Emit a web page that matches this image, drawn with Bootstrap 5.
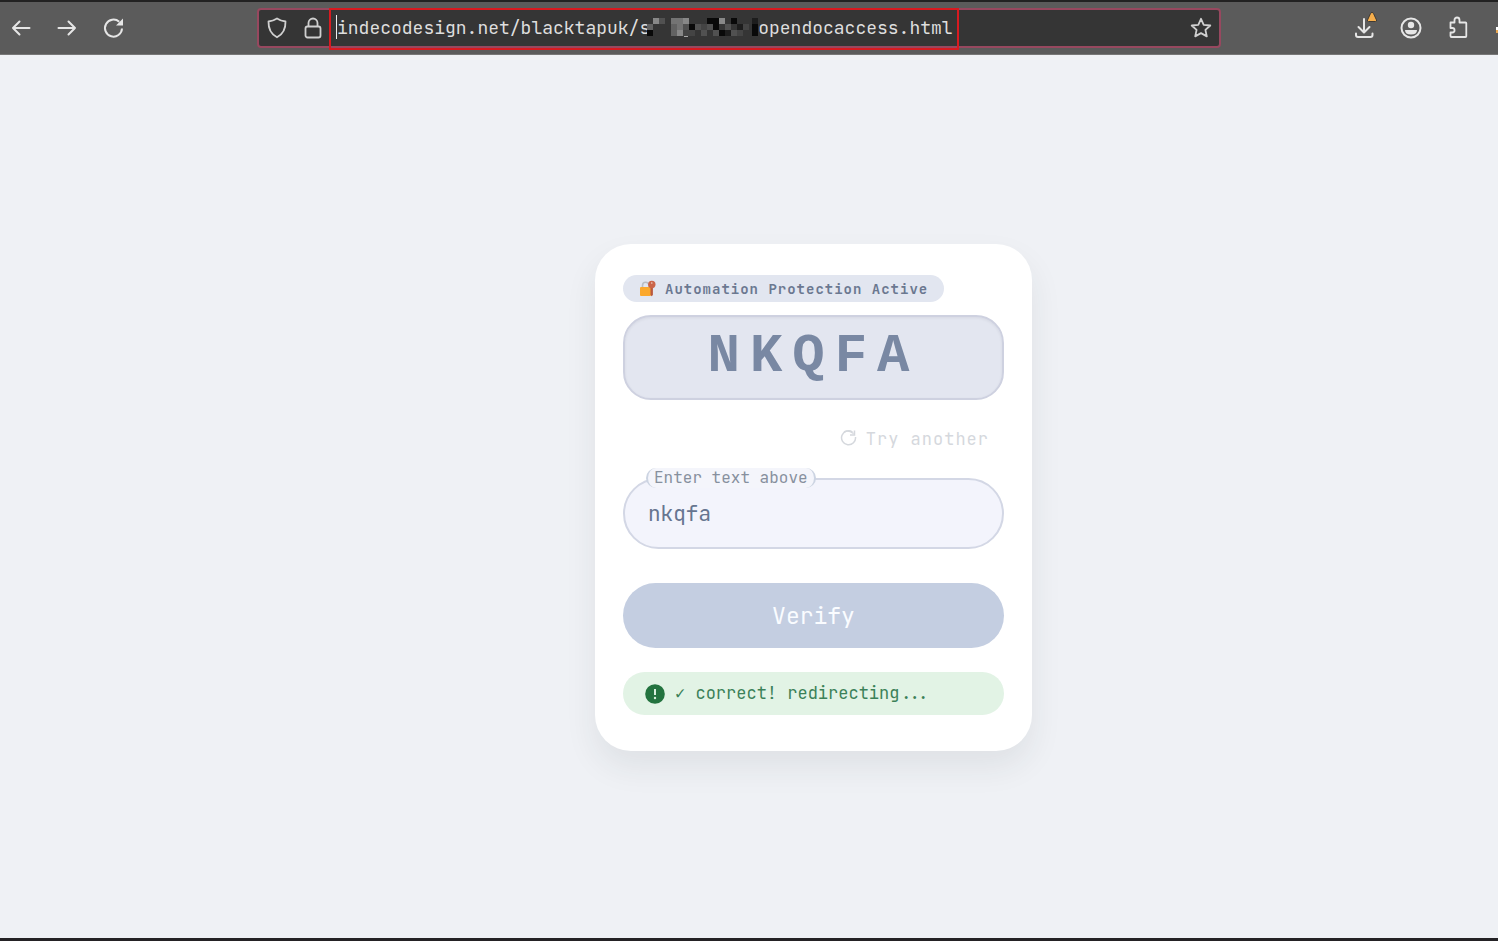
<!DOCTYPE html>
<html lang="en">
<head>
<meta charset="utf-8">
<meta name="viewport" content="width=device-width, initial-scale=1">
<title>Verification</title>
<link href="https://cdn.jsdelivr.net/npm/bootstrap@5.3.0/dist/css/bootstrap.min.css" rel="stylesheet">
<style>
body { background: #eff1f5; font-family: "JetBrains Mono", "DejaVu Sans Mono", monospace; border-bottom: 3px solid #242225; }
.toolbar { background: #5b5b5b; border-top: 2px solid #222; border-bottom: 1px solid #777; height: 55px; color: #e6e6e6; }
.tool-btn { width: 42px; height: 40px; color: inherit; background: none; border: 0; padding: 0 0 2px; }
.nav-tools { gap: 4px; }
.side-tools { gap: 5px; padding-right: 19px; }
.edge-mark { right: 0; top: 25px; width: 2px; height: 6px; background: #fff; border-bottom: 3px solid #e9a750; }
.url-bar { height: 40px; margin: 0 122px 0 123px; background: #353535; border: 2px solid #97485f; border-radius: 4px; color: #d0d0d0; }
.url-icons { width: 70px; gap: 17px; padding-left: 8px; }
.url-field { width: 630px; height: 42px; border: 2px solid #d81a20; margin-top: 2px; }
.url-field input { background: none; border: 0; color: #dedede; font-size: 18px; line-height: 24px; padding: 0 0 3px 6px; outline: 0; }
.caret { left: 5px; top: 5px; width: 1px; height: 24px; background: #eee; }
.mosaic { left: 316px; top: 8px; }
.bookmark-btn { color: inherit; margin-right: 7px; }
.stage { padding: 2px 0 0 129px; }
.verify-card { width: 437px; border: 0; border-radius: 36px; padding: 31px 28px 36px; box-shadow: 0 16px 32px rgba(40, 45, 55, .08); }
.guard-pill { height: 27px; padding: 0 16px; gap: 9px; background: #e2e6f0; color: #6b7890; border-radius: 14px; font-size: 14px; line-height: 20px; font-weight: 600; letter-spacing: 1px; }
.code-box { height: 85px; margin-top: 13px; padding-bottom: 2px; background: #e3e6f0; border: 2px solid #ced1e0; border-radius: 28px; box-shadow: inset 0 1px 3px rgba(0, 0, 0, .06); color: #7988a3; font-family: "Liberation Mono", monospace; font-size: 54px; line-height: 60px; font-weight: 700; letter-spacing: 10px; }
.retry-btn { height: 40px; margin: 18px 0 20px; padding: 0 15px; gap: 9px; background: none; border: 0; color: #d5d8dd; font-size: 17px; line-height: 24px; letter-spacing: 1px; }
.retry-btn span { padding-top: 2px; }
.retry-btn svg { margin-bottom: 2px; }
.answer input { height: 71px; border: 2px solid #d3d7e5; border-radius: 36px; background: #f3f4fc; color: #667590; font-size: 21px; padding: 0 23px; }
.answer label { left: 23px; top: -10px; height: 20px; padding: 0 6px; background: #f4f5fb; border: solid #ccd4e2; border-width: 0 2px; border-radius: 10px; color: #87909e; font-size: 16px; line-height: 20px; }
.verify-btn { height: 65px; margin-top: 34px; padding: 2px 0 0; background: #c4cee1; border: 0; border-radius: 33px; color: #fafcff; font-size: 23px; }
.result { height: 43px; margin-top: 24px; padding: 0 22px; gap: 10px; background: #e2f3e5; color: #3b8158; border-radius: 22px; font-size: 17px; }
</style>
</head>
<body class="d-flex flex-column min-vh-100">
<header class="toolbar d-flex align-items-center position-relative">
  <nav class="nav-tools d-flex" aria-label="History">
    <button class="tool-btn" type="button" aria-label="Back"><svg width="20" height="20" viewBox="0 0 20 20" fill="none" stroke="currentColor" stroke-width="2" stroke-linecap="round" stroke-linejoin="round"><path d="M18.500 10H2M8.500 3.500 2 10l6.500 6.500"/></svg></button>
    <button class="tool-btn" type="button" aria-label="Forward"><svg width="20" height="20" viewBox="0 0 20 20" fill="none" stroke="currentColor" stroke-width="2" stroke-linecap="round" stroke-linejoin="round"><path d="M1.500 10H18M11.500 3.500 18 10l-6.500 6.500"/></svg></button>
    <button class="tool-btn" type="button" aria-label="Reload"><svg width="22" height="22" viewBox="0 0 22 22" fill="none" stroke="currentColor" stroke-width="2"><path d="M17.200 4.800A8.500 8.500 0 1 0 20 11.500"/><path d="M21 1.500v7h-7z" fill="currentColor" stroke="none"/></svg></button>
  </nav>
  <div class="url-bar d-flex align-items-center flex-grow-1">
    <div class="url-icons d-flex align-items-center flex-shrink-0">
      <svg width="20" height="22" viewBox="0 0 20 22" fill="none" stroke="currentColor" stroke-width="1.800" stroke-linejoin="round"><path d="M10 1.500c2.600 1.700 5.300 2.700 8.500 3 .2 6.500-2.300 12.500-8.500 15.800C3.800 17 1.300 11 1.500 4.500c3.200-.3 5.900-1.300 8.500-3z"/></svg>
      <svg width="18" height="22" viewBox="0 0 18 22" fill="none" stroke="currentColor" stroke-width="1.800" stroke-linejoin="round"><rect x="1.500" y="9.500" width="15" height="11" rx="2"/><path d="M4.500 9.500V6a4.500 4.500 0 0 1 9 0v3.500"/></svg>
    </div>
    <div class="url-field position-relative d-flex align-items-center">
      <input class="w-100" type="text" aria-label="Address" spellcheck="false" value="indecodesign.net/blacktapuk/s&nbsp;&nbsp;&nbsp;&nbsp;&nbsp;&nbsp;&nbsp;&nbsp;&nbsp;&nbsp;opendocaccess.html">
      <span class="caret position-absolute"></span>
      <svg class="mosaic position-absolute" width="111" height="20" viewBox="0 0 111 20" shape-rendering="crispEdges" aria-hidden="true">
        <path fill="#353535" d="M0 0h111v18H0z"/>
        <path fill="#888" d="M6 0h6v6H6zM36 0h6v6h-6zM72 0h6v6h-6zM30 12h6v6h-6z"/>
        <path fill="#747474" d="M24 0h12v6H24zM30 6h6v6h-6zM62 6h4v6h-4z"/>
        <path fill="#626262" d="M24 6h6v12h-6zM0 6h6v6H0z"/>
        <path fill="#515151" d="M12 0h6v6h-6zM36 6h6v6h-6zM48 6h6v6h-6zM60 6h6v6h-6zM54 12h6v6h-6zM66 12h6v6h-6zM84 12h6v6h-6zM78 6h6v6h-6z"/>
        <path fill="#444" d="M36 12h12v6H36zM54 6h6v6h-6zM90 12h6v6h-6zM96 6h6v6h-6z"/>
        <path fill="#090909" d="M0 12h6v6H0zM42 6h6v6h-6zM60 0h12v6H60zM66 6h6v6h-6zM84 0h6v6h-6zM72 12h6v6h-6zM105 6h6v12h-6z"/>
        <path fill="#1d1d1d" d="M78 12h6v6h-6zM90 6h6v6h-6zM105 0h6v6h-6z"/>
        <path fill="#aaa" d="M37 18h4v1h-4z"/>
      </svg>
    </div>
    <button class="bookmark-btn ms-auto border-0 bg-transparent p-0 d-flex" type="button" aria-label="Bookmark"><svg width="22" height="22" viewBox="0 0 22 22" fill="none" stroke="currentColor" stroke-width="1.800" stroke-linejoin="round"><path d="m11 1.800 2.700 6 6.600.7-4.900 4.400 1.400 6.500L11 16.100l-5.800 3.300 1.400-6.500L1.700 8.500l6.600-.7z"/></svg></button>
  </div>
  <div class="side-tools d-flex">
    <button class="tool-btn" type="button" aria-label="Downloads"><svg width="28" height="32" viewBox="0 0 28 32" fill="none" stroke="currentColor" stroke-width="2" stroke-linecap="round" stroke-linejoin="round"><path d="M14 8v13M8.500 16l5.500 5.500 5.500-5.500M6 22.500V24q0 2 2 2h12.500q2 0 2-2v-1.500"/><path d="M22 1.500q1 0 1.500 1l3 6.500q.5 1.500-1 1.500h-7q-1.500 0-1-1.500l3-6.500q.5-1 1.500-1z" fill="#f6ae4c" stroke="#3f3a35" stroke-width="1"/></svg></button>
    <button class="tool-btn" type="button" aria-label="Account"><svg width="22" height="22" viewBox="0 0 22 22"><circle cx="11" cy="11" r="9.500" fill="none" stroke="currentColor" stroke-width="2"/><circle cx="11" cy="8" r="3.200" fill="currentColor"/><path d="M5 13h12q0 4.500-6 4.500T5 13z" fill="currentColor"/></svg></button>
    <button class="tool-btn" type="button" aria-label="Extensions"><svg width="22" height="24" viewBox="0 0 22 24" fill="none" stroke="currentColor" stroke-width="1.800" stroke-linejoin="round"><path d="M3.500 7.500h4V5a2.500 2.500 0 0 1 5 0v2.500h6q.8 0 .8.800v12.900q0 .8-.8.800h-14q-1 0-1-1v-3.500h1.800a2.200 2.200 0 0 0 0-4.500H3.500z"/></svg></button>
  </div>
  <span class="edge-mark position-absolute"></span>
</header>

<main class="stage flex-grow-1 d-flex align-items-center justify-content-center">
  <form class="verify-card card" onsubmit="return false">
    <div class="guard-pill d-inline-flex align-items-center align-self-start">
      <svg width="17" height="17" viewBox="0 0 17 17" aria-hidden="true"><path d="M3.500 8V5.500a3.200 3.200 0 0 1 6.400 0V8" fill="none" stroke="#b9bdc3" stroke-width="1.600"/><rect x="1" y="7" width="11" height="9" rx="1" fill="#fba82c"/><path d="M11.500 7.500h2.400V15l-1.200 1.300-1.200-1.300z" fill="#b9593f"/><circle cx="12.800" cy="4.500" r="3.700" fill="#cb6549"/><circle cx="12.800" cy="3" r=".8" fill="#f0d5cc"/></svg>
      <span>Automation Protection Active</span>
    </div>
    <div class="code-box d-flex align-items-center justify-content-center">NKQFA</div>
    <button class="retry-btn d-flex align-items-center align-self-end" type="button">
      <svg width="17" height="17" viewBox="0 0 17 17" fill="none" stroke="currentColor" aria-hidden="true"><path d="M12.500 3A7 7 0 1 0 15.500 8" stroke-width="1.500"/><path d="M4 3Q8 .5 13.500 4.500M14.500 1.500v4.500h-4.500" stroke-width="1.500"/></svg>
      <span>Try another</span>
    </button>
    <div class="answer position-relative">
      <input class="w-100 d-block" id="answer" type="text" value="nkqfa" spellcheck="false">
      <label class="position-absolute" for="answer">Enter text above</label>
    </div>
    <button class="verify-btn w-100" type="submit">Verify</button>
    <div class="result d-flex align-items-center" role="status">
      <svg width="20" height="20" viewBox="0 0 20 20" aria-hidden="true"><circle cx="10" cy="10" r="9.800" fill="#23733f"/><path d="M10 5v6" stroke="#d8efdd" stroke-width="2"/><circle cx="10" cy="14" r="1.200" fill="#d8efdd"/></svg>
      <span>✓ correct! redirecting...</span>
    </div>
  </form>
</main>
<script src="https://cdn.jsdelivr.net/npm/bootstrap@5.3.0/dist/js/bootstrap.bundle.min.js"></script>
</body>
</html>
